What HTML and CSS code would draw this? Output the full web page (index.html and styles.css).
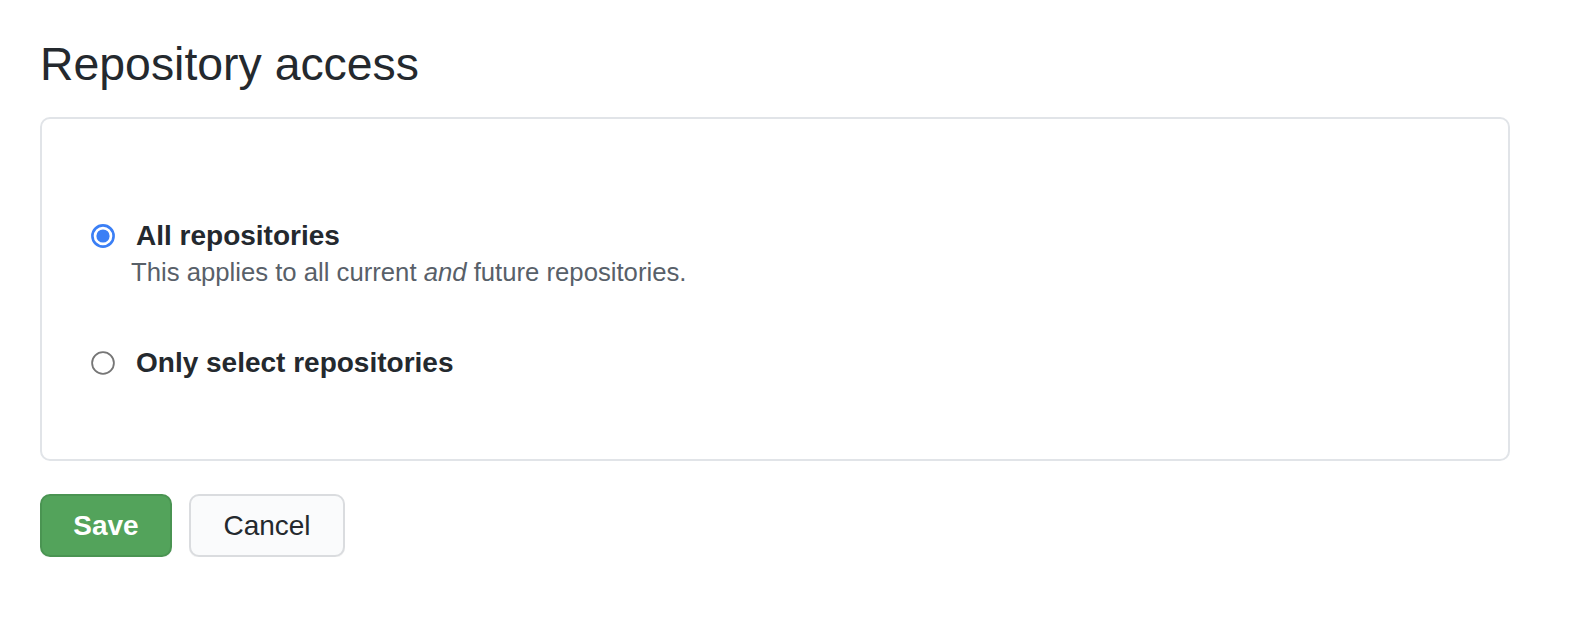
FILE: index.html
```html
<!DOCTYPE html>
<html>
<head>
<meta charset="utf-8">
<link rel="stylesheet" href="styles.css">
</head>
<body>
<div class="page">
  <h1 class="title">Repository access</h1>
  <div class="box">
    <div class="option">
      <div class="row">
        <svg class="radio" width="24" height="24" viewBox="0 0 24 24"><circle cx="12" cy="12" r="10.6" fill="#fff" stroke="#3b7ff5" stroke-width="2.6"/><circle cx="12" cy="12" r="6.6" fill="#3b7ff5"/></svg>
        <span class="label">All repositories</span>
      </div>
      <div class="desc">This applies to all current <em>and</em> future repositories.</div>
    </div>
    <div class="option second">
      <div class="row">
        <svg class="radio" width="24" height="24" viewBox="0 0 24 24"><circle cx="12" cy="12" r="10.9" fill="#fff" stroke="#767676" stroke-width="1.8"/></svg>
        <span class="label">Only select repositories</span>
      </div>
    </div>
  </div>
  <div class="actions">
    <button class="btn btn-primary">Save</button>
    <button class="btn btn-default">Cancel</button>
  </div>
</div>
</body>
</html>
```

FILE: styles.css
```css
html, body {
  margin: 0;
  padding: 0;
  background: #ffffff;
}
body {
  font-family: "Liberation Sans", Arial, sans-serif;
  color: #24292e;
}
.page {
  padding: 36px 0 0 40px;
  width: 1470px;
}
.title {
  margin: 0;
  font-size: 46.4px;
  line-height: 57px;
  font-weight: 400;
  color: #24292e;
}
.box {
  margin-top: 24px;
  border: 2px solid #e1e4e8;
  border-radius: 10px;
  padding: 100px 0 79px 49px;
}
.row {
  display: flex;
  align-items: center;
  height: 34px;
}
.radio {
  flex: none;
  display: block;
  margin-right: 21px;
}
.label {
  font-size: 28px;
  line-height: 34px;
  font-weight: 700;
  color: #24292e;
}
.desc {
  margin-top: 3px;
  padding-left: 40px;
  font-size: 25.7px;
  line-height: 32px;
  color: #586069;
}
.desc em {
  font-style: italic;
}
.second {
  margin-top: 58px;
}
.actions {
  display: flex;
  gap: 17px;
  margin-top: 33px;
}
.btn {
  height: 63px;
  border-radius: 10px;
  font-family: "Liberation Sans", Arial, sans-serif;
  font-size: 28px;
  padding: 0;
  box-shadow: 0 1px 0 rgba(27, 31, 35, 0.04);
}
.btn-primary {
  width: 132px;
  background: #53a35b;
  border: 2px solid #4a9452;
  color: #ffffff;
  font-weight: 700;
}
.btn-default {
  width: 156px;
  background: #fafbfc;
  border: 2px solid #dadcdf;
  color: #24292e;
  font-weight: 400;
}
```
